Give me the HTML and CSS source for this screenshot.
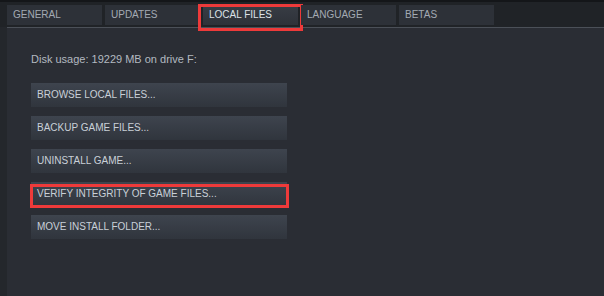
FILE: index.html
```html
<!DOCTYPE html>
<html lang="en">
<head>
    <meta charset="UTF-8">
    <title>Properties - Local Files</title>
    <link rel="stylesheet" href="styles.css">
</head>
<body>
    <div class="header">
        <div class="tabs">
            <div class="tab">GENERAL</div>
            <div class="tab">UPDATES</div>
            <div class="tab active marked">LOCAL FILES</div>
            <div class="tab">LANGUAGE</div>
            <div class="tab">BETAS</div>
        </div>
    </div>
    <div class="page">
        <div class="panel">
            <div class="disk">Disk usage: 19229 MB on drive F:</div>
            <div class="actions">
                <button class="btn">BROWSE LOCAL FILES...</button>
                <button class="btn">BACKUP GAME FILES...</button>
                <button class="btn">UNINSTALL GAME...</button>
                <button class="btn marked">VERIFY INTEGRITY OF GAME FILES...</button>
                <button class="btn">MOVE INSTALL FOLDER...</button>
            </div>
        </div>
    </div>
</body>
</html>
```

FILE: styles.css
```css
html, body {
    height: 100%;
}
body {
    margin: 0;
    font-family: 'Liberation Sans', Arial, sans-serif;
    background-color: #24272c;
    display: flex;
    flex-direction: column;
    overflow: hidden;
}
.header {
    background-color: #202327;
    border-top: 2px solid #141619;
    padding: 3px 0 2px 7px;
}
.tabs {
    display: flex;
    gap: 3px;
}
.tab {
    position: relative;
    width: 89px;
    height: 20px;
    line-height: 20px;
    padding-left: 6px;
    background-color: #2d3138;
    color: #a3aab3;
    font-size: 10px;
}
.tab.active {
    background: linear-gradient(#383d45, #2e3239);
    color: #dde2e7;
}
.tab.marked::after {
    content: "";
    position: absolute;
    top: -1px;
    bottom: -6px;
    left: -5px;
    right: -5px;
    border: 3px solid #ee3a3a;
}
.page {
    flex: 1;
    margin-left: 7px;
    background-color: #2a2d34;
    border-top: 1px solid #4b5058;
}
.panel {
    padding: 25px 0 0 24px;
}
.disk {
    color: #b3b9c0;
    font-size: 11px;
    line-height: 13px;
    margin-bottom: 17px;
}
.actions {
    display: flex;
    flex-direction: column;
    gap: 9px;
}
.btn {
    position: relative;
    width: 256px;
    height: 24px;
    padding: 0 0 0 6px;
    border: none;
    background: linear-gradient(#3e444e, #30353d);
    color: #c9d0d8;
    font-family: inherit;
    font-size: 10px;
    line-height: 24px;
    text-align: left;
}
.btn.marked::after {
    content: "";
    position: absolute;
    top: 2px;
    bottom: -2px;
    left: -1px;
    right: -2px;
    border: 3px solid #ee3a3a;
}
```
